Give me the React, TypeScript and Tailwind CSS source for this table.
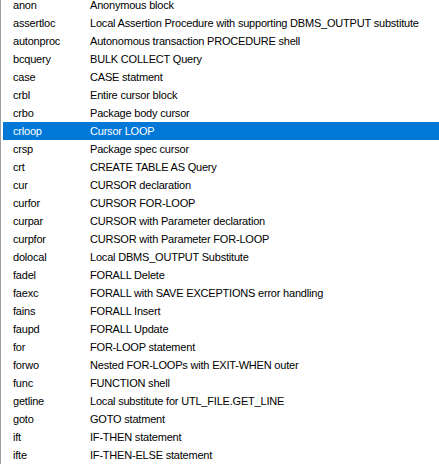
import React from "react";

const rows: [string, string][] = [
  ["anon", "Anonymous block"],
  ["assertloc", "Local Assertion Procedure with supporting DBMS_OUTPUT substitute"],
  ["autonproc", "Autonomous transaction PROCEDURE shell"],
  ["bcquery", "BULK COLLECT Query"],
  ["case", "CASE statment"],
  ["crbl", "Entire cursor block"],
  ["crbo", "Package body cursor"],
  ["crloop", "Cursor LOOP"],
  ["crsp", "Package spec cursor"],
  ["crt", "CREATE TABLE AS Query"],
  ["cur", "CURSOR declaration"],
  ["curfor", "CURSOR FOR-LOOP"],
  ["curpar", "CURSOR with Parameter declaration"],
  ["curpfor", "CURSOR with Parameter FOR-LOOP"],
  ["dolocal", "Local DBMS_OUTPUT Substitute"],
  ["fadel", "FORALL Delete"],
  ["faexc", "FORALL with SAVE EXCEPTIONS error handling"],
  ["fains", "FORALL Insert"],
  ["faupd", "FORALL Update"],
  ["for", "FOR-LOOP statement"],
  ["forwo", "Nested FOR-LOOPs with EXIT-WHEN outer"],
  ["func", "FUNCTION shell"],
  ["getline", "Local substitute for UTL_FILE.GET_LINE"],
  ["goto", "GOTO statment"],
  ["ift", "IF-THEN statement"],
  ["ifte", "IF-THEN-ELSE statement"],
];

export default function App() {
  return (
    <div
      className="w-[439px] h-[464px] overflow-hidden bg-white border-l border-[#a0a0a0] flex"
      style={{ fontFamily: '"Liberation Sans", Arial, sans-serif' }}
    >
      <div className="flex-1 pl-[2px] -mt-[4px]">
        {rows.map(([k, d]) => {
          const sel = k === "crloop";
          return (
            <div
              key={k}
              className={
                "h-[18px] flex items-center text-[11px] tracking-[-0.2px] leading-none " +
                (sel ? "bg-[#0078d7] text-white" : "text-black")
              }
            >
              <span className="w-[87px] pl-[10px] shrink-0">{k}</span>
              <span className="whitespace-nowrap">{d}</span>
            </div>
          );
        })}
      </div>
    </div>
  );
}
